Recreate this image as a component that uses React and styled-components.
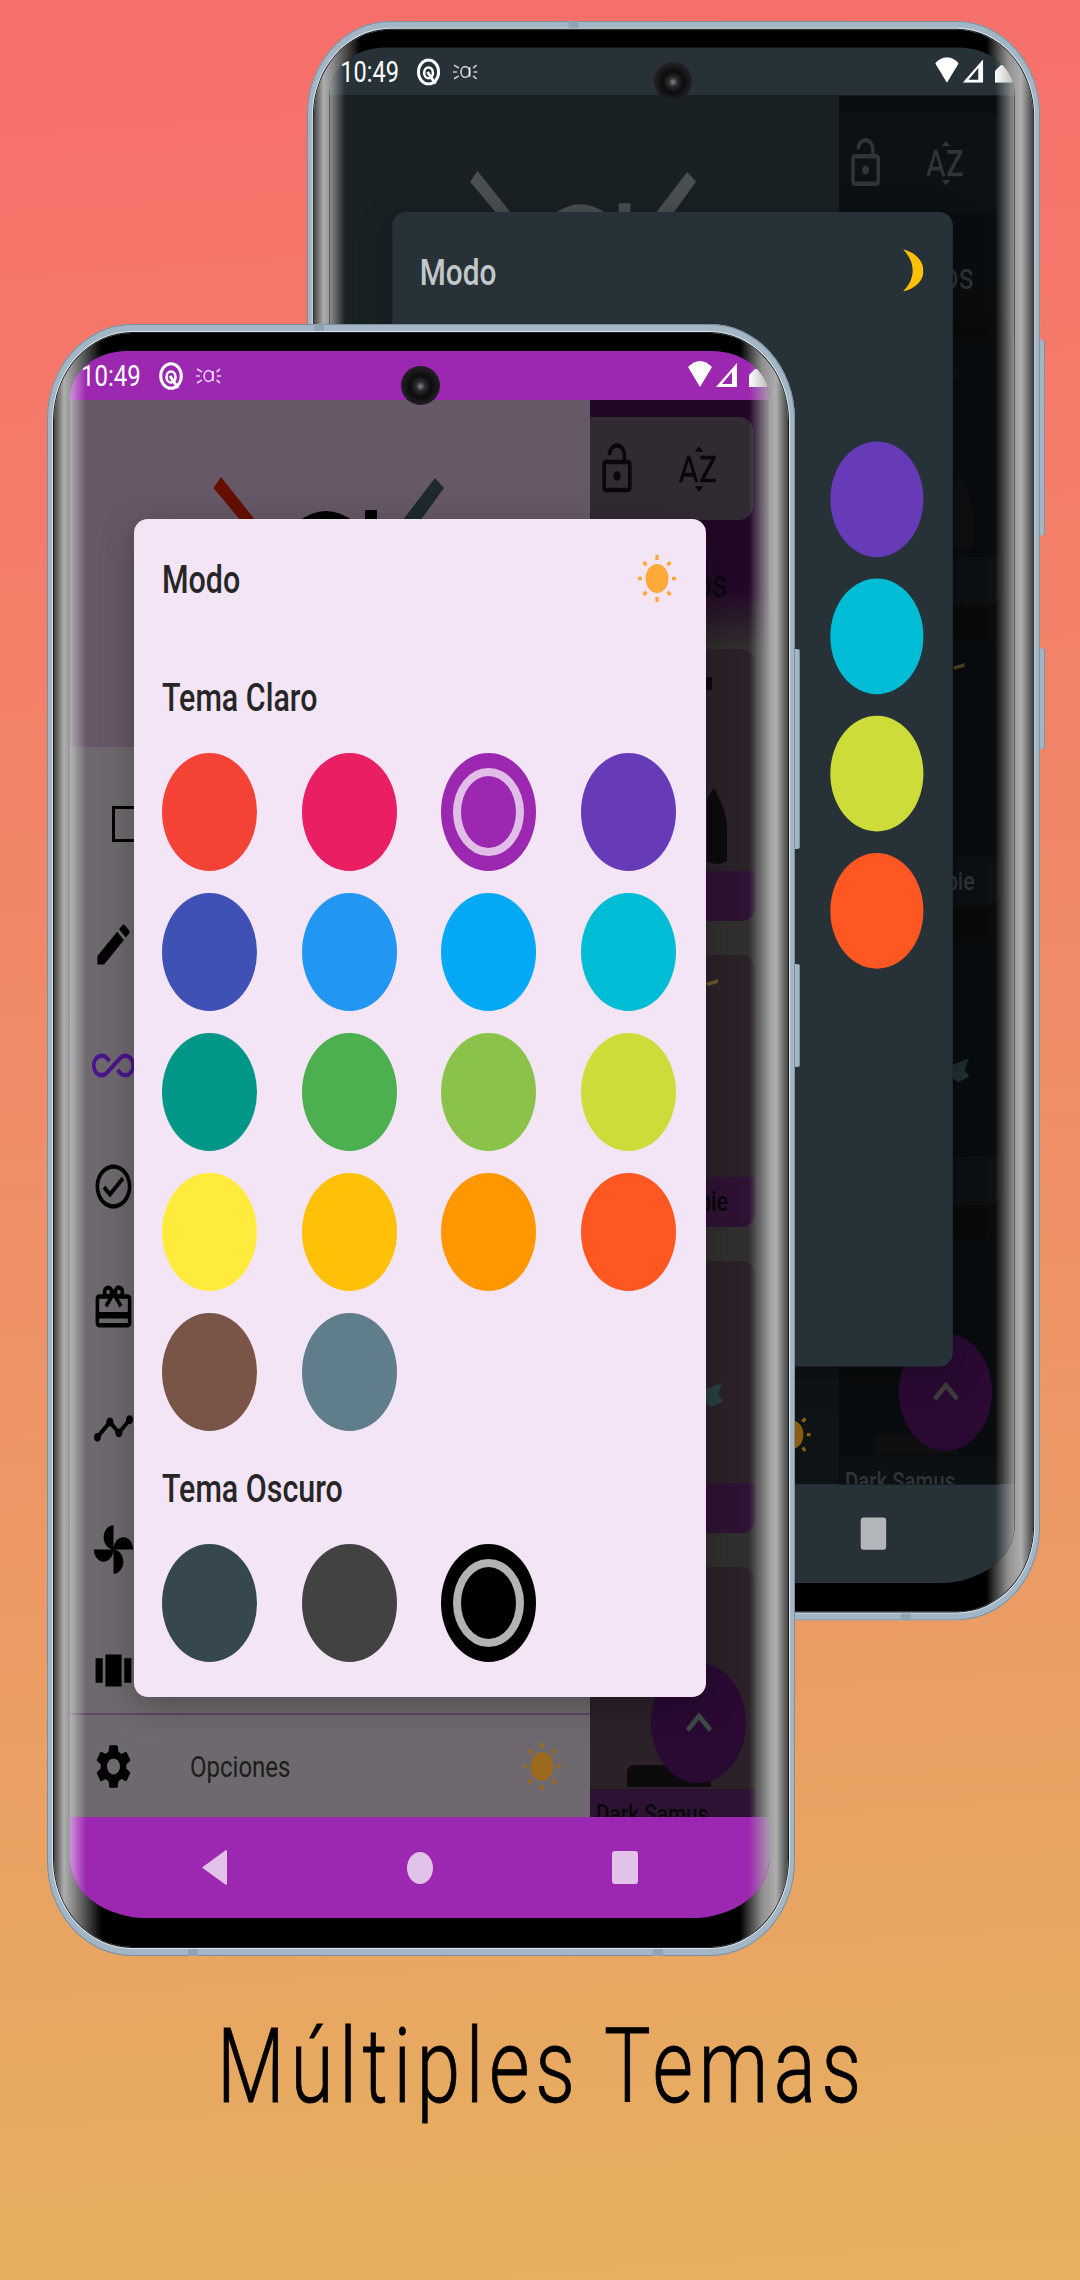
import React from "react";
import styled, { createGlobalStyle, ThemeProvider } from "styled-components";
import {
  MdEdit,
  MdAllInclusive,
  MdOutlineCheckCircle,
  MdOutlineRedeem,
  MdTimeline,
  MdSettings,
  MdLockOpen,
  MdSortByAlpha,
  MdKeyboardArrowUp,
} from "react-icons/md";

const lightTheme = {
  bar: "#9c27b0",
  barIcon: "rgba(255,255,255,0.72)",
  drawer: "#6e696e",
  header: "#675868",
  divider: "#5e4764",
  icon: "#000",
  accent: "#4a148c",
  text: "#1c1c1c",
  sunDim: "#9b6a1e",
  logoLeft: "#640f00",
  logoRight: "#1e2a2c",
  logoMid: "#000",
  listTop: "#220827",
  listGap: "#312e2f",
  toolbar: "#322a33",
  card: "#2b2229",
  band: "#2e1233",
  listText: "#09070a",
  art: "#0c0a0d",
  artGold: "#6d5a2a",
  artTeal: "#2a4040",
  fab: "#2a0a33",
  fabIcon: "#3f4a46",
  dialog: "#f3e5f5",
  dialogText: "#262626",
};

const darkTheme = {
  bar: "#263238",
  barIcon: "rgba(255,255,255,0.65)",
  drawer: "#0e1315",
  header: "#1a2124",
  divider: "#12181a",
  icon: "#2a2e30",
  accent: "#2a2e30",
  text: "#33383a",
  sunDim: "#8a5d10",
  logoLeft: "#4c4f50",
  logoRight: "#4c4f50",
  logoMid: "#4c4f50",
  listTop: "#0a0d0f",
  listGap: "#0a0a0a",
  toolbar: "#0d1114",
  card: "#090c0e",
  band: "#0c1012",
  listText: "#2f3436",
  art: "#0f0e10",
  artGold: "#4f4320",
  artTeal: "#1d3031",
  fab: "#2a0a33",
  fabIcon: "#3c3c3c",
  dialog: "#263238",
  dialogText: "#c4c7c9",
};

const lightSwatches = [
  "#f44336", "#e91e63", "#9c27b0", "#673ab7",
  "#3f51b5", "#2196f3", "#03a9f4", "#00bcd4",
  "#009688", "#4caf50", "#8bc34a", "#cddc39",
  "#ffeb3b", "#ffc107", "#ff9800", "#ff5722",
  "#795548", "#607d8b",
];
const darkSwatches = ["#37474f", "#424242", "#000000"];

const GlobalStyle = createGlobalStyle`
  html, body {
    margin: 0;
    padding: 0;
  }
  body {
    font-family: "Roboto", "Liberation Sans", sans-serif;
  }
`;

const Page = styled.div`
  width: 1080px;
  height: 2280px;
  overflow: hidden;
  background: linear-gradient(176deg, #f76e6b 0%, #ee9166 55%, #e5b160 100%);
`;

const Stage = styled.div`
  position: relative;
  height: 2015px;
`;

const Caption = styled.div`
  text-align: center;
  font-size: 103px;
  line-height: 103px;
  font-weight: 300;
  letter-spacing: 7.5px;
  color: #000;
  transform: translateX(2px) scaleX(0.76);
  -webkit-text-stroke: 0.9px #000;
`;

const Frame = styled.div`
  position: absolute;
  left: ${(p) => p.$left}px;
  top: ${(p) => p.$top}px;
  width: 748px;
  height: 1632px;
  box-sizing: border-box;
  padding: 9px 7px;
  border-radius: 85px / 95px;
  background: #a3b6c6;
  box-shadow: inset 0 0 0 1px #7e8e9c;
  transform: scale(${(p) => p.$scale});
  transform-origin: 0 0;
`;

const SideButton = styled.div`
  position: absolute;
  right: -5px;
  top: ${(p) => p.$top}px;
  width: 5px;
  height: ${(p) => p.$height}px;
  border-radius: 0 3px 3px 0;
  background: #a3b6c6;
  box-shadow: inset -1px 0 0 #7e8e9c;
`;

const EdgeMark = styled.div`
  position: absolute;
  left: ${(p) => p.$left}px;
  ${(p) => (p.$bottom ? "bottom: 0;" : "top: 0;")}
  width: 10px;
  height: 7px;
  background: #8fa3b3;
`;

const Bezel = styled.div`
  height: 100%;
  box-sizing: border-box;
  padding: 18px 19px 29px 16px;
  border-radius: 78px / 88px;
  box-shadow: 0 0 0 1px #16181a, 0 0 0 2px #dfe7ec;
  background: linear-gradient(
    90deg,
    #444 0,
    #aeaeae 10px,
    #8f8f8f 18px,
    #000 48px,
    #000 calc(100% - 48px),
    #8f8f8f calc(100% - 26px),
    #aeaeae calc(100% - 12px),
    #444 100%
  );
`;

const Screen = styled.div`
  position: relative;
  display: flex;
  flex-direction: column;
  height: 100%;
  overflow: hidden;
  border-radius: 57px 57px 78px 78px / 47px 47px 58px 58px;
  background: ${(p) => p.theme.bar};
  &::after {
    content: "";
    position: absolute;
    inset: 0;
    pointer-events: none;
    background: linear-gradient(
      90deg,
      rgba(255, 255, 255, 0.5) 0,
      rgba(255, 255, 255, 0) 16px,
      rgba(170, 170, 170, 0) calc(100% - 20px),
      rgba(170, 170, 170, 0.85) 100%
    );
  }
`;

const Camera = styled.div`
  position: absolute;
  left: 354px;
  top: 42px;
  width: 39px;
  height: 39px;
  border-radius: 50%;
  background: radial-gradient(circle at 50% 52%, #8a8a8e 0, #2c2c30 16%, #0c0c0e 38%, #222226 70%, #151517 100%);
`;

const StatusBar = styled.div`
  display: flex;
  align-items: center;
  flex-shrink: 0;
  height: 49px;
  padding-left: 11px;
  color: #fff;
`;

const Squeezed = styled.span`
  display: inline-block;
  flex-shrink: 0;
  white-space: nowrap;
  transform: scaleX(0.8);
  transform-origin: left center;
`;

const Clock = styled(Squeezed)`
  width: 73px;
  font-size: 30px;
  line-height: 34px;
`;

const StatusLeft = styled.div`
  display: flex;
  align-items: center;
  gap: 13px;
  margin-left: 5px;
`;

const StatusRight = styled.div`
  display: flex;
  align-items: flex-end;
  gap: 4px;
  margin: 0 -12px 3px auto;
`;

const Main = styled.div`
  position: relative;
  display: flex;
  flex: 1;
  min-height: 0;
`;

const Drawer = styled.div`
  display: flex;
  flex-direction: column;
  flex-shrink: 0;
  width: 520px;
  background: ${(p) => p.theme.drawer};
`;

const DrawerHeader = styled.div`
  flex-shrink: 0;
  height: 347px;
  box-sizing: border-box;
  padding: 77px 0 0 143px;
  background: ${(p) => p.theme.header};
`;

const DrawerList = styled.div`
  flex: 1;
  min-height: 0;
  overflow: hidden;
  padding-top: 16px;
`;

const DrawerRow = styled.div`
  display: flex;
  align-items: center;
  height: 121px;
  padding-left: 22px;
  color: ${(p) => (p.$active ? p.theme.accent : p.theme.icon)};
`;

const IconBox = styled.span`
  display: inline-flex;
  flex-shrink: 0;
  svg {
    width: 43px;
    height: 53px;
    display: block;
  }
`;

const OutlineBox = styled.span`
  width: 44px;
  height: 36px;
  margin-left: 20px;
  box-sizing: border-box;
  border: 3px solid ${(p) => p.theme.icon};
`;

const DrawerFooter = styled.div`
  display: flex;
  align-items: center;
  flex-shrink: 0;
  height: 104px;
  box-sizing: border-box;
  padding: 0 29px 0 22px;
  border-top: 2px solid ${(p) => p.theme.divider};
  color: ${(p) => p.theme.icon};
`;

const FooterLabel = styled(Squeezed)`
  margin-left: 55px;
  font-size: 30px;
  color: ${(p) => p.theme.text};
`;

const FooterSun = styled.span`
  margin-left: auto;
  display: flex;
  color: ${(p) => p.theme.sunDim};
`;

const ListPanel = styled.div`
  position: relative;
  flex: 1;
  min-width: 0;
  overflow: hidden;
  background: ${(p) => p.theme.listGap};
`;

const ListTop = styled.div`
  height: 249px;
  box-sizing: border-box;
  padding-top: 17px;
  background: linear-gradient(${(p) => p.theme.listTop} 76%, ${(p) => p.theme.listGap} 100%);
`;

const Toolbar = styled.div`
  display: flex;
  align-items: center;
  height: 103px;
  width: 163px;
  box-sizing: border-box;
  padding-left: 5px;
  gap: 37px;
  border-radius: 0 14px 14px 0;
  background: ${(p) => p.theme.toolbar};
  color: ${(p) => p.theme.listText};
  svg {
    width: 44px;
    height: 56px;
    display: block;
    flex-shrink: 0;
  }
`;

const SectionLabel = styled.div`
  margin-top: 41px;
  padding-right: 52px;
  text-align: right;
  white-space: nowrap;
  font-size: 38px;
  line-height: 46px;
  color: ${(p) => p.theme.listText};
  transform: scaleX(0.8);
  transform-origin: right center;
`;

const Card = styled.div`
  display: flex;
  flex-direction: column;
  width: 165px;
  height: 272px;
  margin-bottom: 34px;
  border-radius: 0 14px 14px 0;
  overflow: hidden;
  background: ${(p) => p.theme.card};
`;

const CardArt = styled.svg`
  flex: 1;
  min-height: 0;
  display: block;
`;

const CardBand = styled.div`
  display: flex;
  align-items: center;
  flex-shrink: 0;
  height: 50px;
  font-size: 27px;
  font-weight: 500;
  background: ${(p) => p.theme.band};
  color: ${(p) => p.theme.listText};
`;

const BandRight = styled.span`
  margin-left: auto;
  padding-right: 34px;
  white-space: nowrap;
  transform: scaleX(0.8);
  transform-origin: right center;
`;

const BandLeft = styled(Squeezed)`
  margin-left: 6px;
  font-size: 26px;
`;

const Fab = styled.div`
  position: absolute;
  right: 23px;
  bottom: 34px;
  display: flex;
  align-items: center;
  justify-content: center;
  width: 95px;
  height: 120px;
  border-radius: 50%;
  background: ${(p) => p.theme.fab};
  color: ${(p) => p.theme.fabIcon};
  svg {
    width: 52px;
    height: 64px;
    display: block;
  }
`;

const NavBar = styled.div`
  display: flex;
  align-items: center;
  justify-content: center;
  flex-shrink: 0;
  height: 101px;
  background: ${(p) => p.theme.bar};
  color: ${(p) => p.theme.barIcon};
`;

const NavSlot = styled.div`
  display: flex;
  justify-content: center;
  width: 205px;
`;

const NavSquare = styled.div`
  width: 26px;
  height: 33px;
  border-radius: 3px;
  background: currentColor;
`;

const NavDot = styled.div`
  width: 26px;
  height: 32px;
  border-radius: 50%;
  background: currentColor;
`;

const Dialog = styled.div`
  position: absolute;
  left: 64px;
  top: 119px;
  width: 572px;
  box-sizing: border-box;
  padding: 36px 30px 35px 28px;
  border-radius: 14px;
  background: ${(p) => p.theme.dialog};
  color: ${(p) => p.theme.dialogText};
  box-shadow: 0 8px 34px rgba(0, 0, 0, 0.28);
`;

const DialogHeader = styled.div`
  display: flex;
  align-items: center;
  justify-content: space-between;
  height: 47px;
`;

const DialogTitle = styled(Squeezed)`
  display: block;
  font-size: 38px;
  line-height: 44px;
  font-weight: 500;
`;

const ModeTitle = styled(DialogTitle)`
  margin-top: 3px;
`;

const SectionTitle = styled(DialogTitle)`
  margin-top: ${(p) => p.$top}px;
`;

const SwatchGrid = styled.div`
  display: grid;
  grid-template-columns: repeat(4, 95px);
  column-gap: 44.5px;
  row-gap: 22px;
  margin-top: 33px;
`;

const Swatch = styled.div`
  position: relative;
  height: 118px;
  border-radius: 50%;
  background: ${(p) => p.$color};
  ${(p) =>
    p.$selected &&
    `&::after {
      content: "";
      position: absolute;
      inset: 15px 12px;
      box-sizing: border-box;
      border: 8px solid rgba(255, 255, 255, 0.7);
      border-radius: 50%;
    }`}
`;

const LogoSvg = styled.svg`
  display: block;
  .left {
    fill: ${(p) => p.theme.logoLeft};
  }
  .right {
    fill: ${(p) => p.theme.logoRight};
  }
  .mid {
    fill: ${(p) => p.theme.logoMid};
  }
`;

const Art = styled.path`
  fill: ${(p) => (p.$gold ? p.theme.artGold : p.$teal ? p.theme.artTeal : p.theme.art)};
`;

const SUN_RAYS = [0, 45, 90, 135, 180, 225, 270, 315];

function Sun({ color = "currentColor" }) {
  return (
    <svg width="38" height="47" viewBox="0 0 38 47" fill={color}>
      <ellipse cx="19" cy="23.5" rx="11.5" ry="14.5" />
      {SUN_RAYS.map((deg) => {
        const a = (deg * Math.PI) / 180;
        const x1 = 19 + Math.cos(a) * 15;
        const y1 = 23.5 + Math.sin(a) * 18.5;
        const x2 = 19 + Math.cos(a) * 19;
        const y2 = 23.5 + Math.sin(a) * 23.5;
        return <line key={deg} x1={x1} y1={y1} x2={x2} y2={y2} stroke={color} strokeWidth="3.4" />;
      })}
    </svg>
  );
}

function Moon() {
  return (
    <svg width="22" height="43" viewBox="0 0 22 43" fill="#ffc107">
      <path d="M1 0C14 3 22 12 22 22C22 32 14 40 1 43C8 36 11 29 11 21.5C11 14 8 7 1 0Z" />
    </svg>
  );
}

function Logo() {
  return (
    <LogoSvg width="232" height="44" viewBox="0 0 232 44">
      <polygon className="left" points="0.5,11 8,0 43,44 28,44" />
      <polygon className="right" points="222,1 231,11 207,44 189,44" />
      <path className="mid" d="M86 44Q113 24 140 44Z" />
      <rect className="mid" x="152" y="33" width="12" height="11" />
    </LogoSvg>
  );
}

// the old material "toys" pinwheel, react-icons only has the car version
function Pinwheel(props) {
  return (
    <svg viewBox="0 0 24 24" fill="currentColor" {...props}>
      <path d="M12 12c0-3 2.5-5.5 5.5-5.5S23 9 23 12H12zm0 0c0 3-2.5 5.5-5.5 5.5S1 15 1 12h11zm0 0c-3 0-5.5-2.5-5.5-5.5S9 1 12 1v11zm0 0c3 0 5.5 2.5 5.5 5.5S15 23 12 23V12z" />
    </svg>
  );
}

function ThreeBars(props) {
  return (
    <svg viewBox="0 0 24 24" fill="currentColor" {...props}>
      <path d="M2 6.5h4v11H2zM7.5 4.7h9v14.6h-9zM18 6.5h4v11h-4z" />
    </svg>
  );
}

function StatusIcons() {
  return (
    <>
      <Clock>10:49</Clock>
      <StatusLeft>
        <svg width="24" height="28" viewBox="0 0 24 28" fill="none" stroke="#fff">
          <ellipse cx="12" cy="14" rx="10.3" ry="12.3" strokeWidth="3" />
          <ellipse cx="12" cy="15" rx="4.5" ry="5.5" strokeWidth="2.6" />
          <line x1="11" y1="14" x2="19" y2="26" strokeWidth="3" />
        </svg>
        <svg width="25" height="18" viewBox="0 0 25 18" fill="none" stroke="rgba(255,255,255,0.75)" strokeWidth="1.7">
          <ellipse cx="12.5" cy="9" rx="4.4" ry="5.4" />
          <line x1="17" y1="4" x2="17" y2="14" />
          <path d="M1 2L6 5M1 16L6 13M0 9H4M24 2L20.5 5M24 16L20.5 13M25 9H21" />
        </svg>
      </StatusLeft>
      <StatusRight>
        <svg width="24" height="26" viewBox="0 0 24 26" fill="#fff">
          <path d="M0 6Q12 -6 24 6L12 26Z" />
        </svg>
        <svg width="21" height="24" viewBox="0 0 21 24" fill="#fff" fillRule="evenodd">
          <path d="M21 0V24H0ZM16 9L6 21H16Z" />
        </svg>
        <svg width="32" height="18" viewBox="0 0 32 18" fill="#fff" style={{ marginLeft: 8 }}>
          <path d="M0 18V6L6 0H32V18Z" />
        </svg>
      </StatusRight>
    </>
  );
}

const menuIcons = [MdEdit, MdAllInclusive, MdOutlineCheckCircle, MdOutlineRedeem, MdTimeline, Pinwheel, ThreeBars];

function ThemeDialog({ dark }) {
  return (
    <Dialog>
      <DialogHeader>
        <ModeTitle>Modo</ModeTitle>
        {dark ? <Moon /> : <Sun color="#ffa93a" />}
      </DialogHeader>
      <SectionTitle $top={74}>Tema Claro</SectionTitle>
      <SwatchGrid>
        {lightSwatches.map((c) => (
          <Swatch key={c} $color={c} $selected={!dark && c === "#9c27b0"} />
        ))}
      </SwatchGrid>
      <SectionTitle $top={36}>Tema Oscuro</SectionTitle>
      <SwatchGrid>
        {darkSwatches.map((c) => (
          <Swatch key={c} $color={c} $selected={c === "#000000"} />
        ))}
      </SwatchGrid>
    </Dialog>
  );
}

function Phone({ left, top, scale, theme, dark }) {
  return (
    <ThemeProvider theme={theme}>
      <Frame $left={left} $top={top} $scale={scale}>
        <EdgeMark $left={267} />
        <EdgeMark $left={141} $bottom />
        <EdgeMark $left={606} $bottom />
        <SideButton $top={325} $height={200} />
        <SideButton $top={640} $height={103} />
        <Bezel>
          <Screen>
            <StatusBar>
              <StatusIcons />
            </StatusBar>
            <Main>
              <Drawer>
                <DrawerHeader>
                  <Logo />
                </DrawerHeader>
                <DrawerList>
                  <DrawerRow>
                    <OutlineBox />
                  </DrawerRow>
                  {menuIcons.map((Icon, i) => (
                    <DrawerRow key={i} $active={i === 1}>
                      <IconBox>
                        <Icon preserveAspectRatio="none" />
                      </IconBox>
                    </DrawerRow>
                  ))}
                </DrawerList>
                <DrawerFooter>
                  <IconBox>
                    <MdSettings preserveAspectRatio="none" />
                  </IconBox>
                  <FooterLabel>Opciones</FooterLabel>
                  <FooterSun>
                    <Sun />
                  </FooterSun>
                </DrawerFooter>
              </Drawer>
              <ListPanel>
                <ListTop>
                  <Toolbar>
                    <MdLockOpen preserveAspectRatio="none" />
                    <MdSortByAlpha preserveAspectRatio="none" />
                  </Toolbar>
                  <SectionLabel>Juegos</SectionLabel>
                </ListTop>
                <Card>
                  <CardArt viewBox="0 0 165 222" width="165" height="222">
                    <Art d="M116 28h6v13h-6zM124 139C130 150 137 165 137 178V212Q127 218 117 212V150Z" />
                  </CardArt>
                  <CardBand />
                </Card>
                <Card>
                  <CardArt viewBox="0 0 165 222" width="165" height="222">
                    <Art $gold d="M116 28L128 24V28L118 31Z" />
                  </CardArt>
                  <CardBand>
                    <BandRight>Zombie</BandRight>
                  </CardBand>
                </Card>
                <Card>
                  <CardArt viewBox="0 0 165 222" width="165" height="222">
                    <Art $teal d="M116 128L132 122L128 134L133 140L122 146L116 142Z" />
                  </CardArt>
                  <CardBand />
                </Card>
                <Card>
                  <CardArt viewBox="0 0 165 222" width="165" height="222">
                    <Art d="M37 206Q37 198 45 198H113Q121 198 121 206V220H37Z" />
                  </CardArt>
                  <CardBand>
                    <BandLeft>Dark Samus</BandLeft>
                  </CardBand>
                </Card>
                <Fab>
                  <MdKeyboardArrowUp preserveAspectRatio="none" />
                </Fab>
              </ListPanel>
              <ThemeDialog dark={dark} />
            </Main>
            <NavBar>
              <NavSlot>
                <svg width="25" height="35" viewBox="0 0 25 35" fill="currentColor">
                  <path d="M25 1V34L24 35L0 17.5L24 0Z" />
                </svg>
              </NavSlot>
              <NavSlot>
                <NavDot />
              </NavSlot>
              <NavSlot>
                <NavSquare />
              </NavSlot>
            </NavBar>
          </Screen>
        </Bezel>
        <Camera />
      </Frame>
    </ThemeProvider>
  );
}

const App = () => {
  return (
    <Page>
      <GlobalStyle />
      <Stage>
        <Phone left={307} top={21} scale={0.98} theme={darkTheme} dark />
        <Phone left={47} top={324} scale={1} theme={lightTheme} />
      </Stage>
      <Caption>Múltiples Temas</Caption>
    </Page>
  );
};

export default App;
